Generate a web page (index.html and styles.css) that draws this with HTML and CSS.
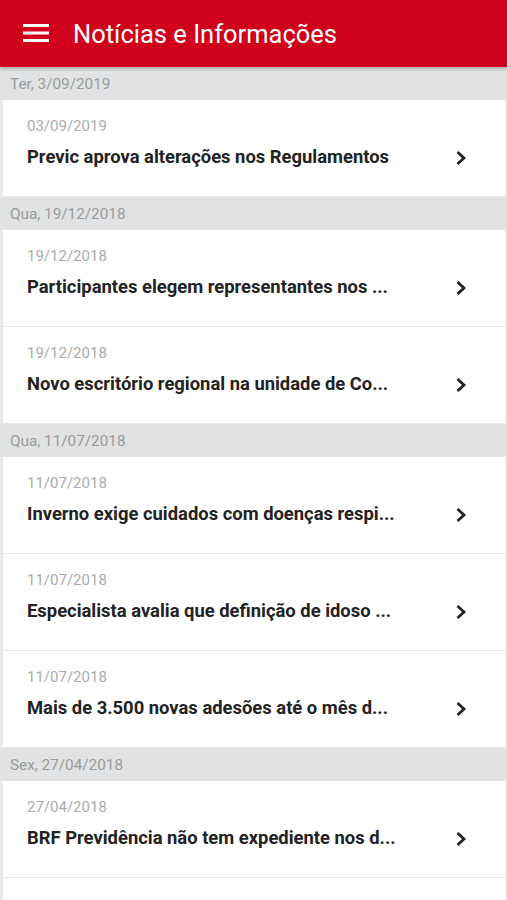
FILE: index.html
```html
<!DOCTYPE html>
<html lang="pt">
<head>
<meta charset="utf-8">
<link rel="stylesheet" href="styles.css">
</head>
<body>
<header class="appbar">
  <svg class="menu" width="26" height="18" viewBox="0 0 26 18"><rect x="0" y="0" width="26" height="3" fill="#fff"/><rect x="0" y="7.5" width="26" height="3" fill="#fff"/><rect x="0" y="15" width="26" height="3" fill="#fff"/></svg>
  <h1 class="title">Notícias e Informações</h1>
</header>
<main class="list">
  <div class="section">Ter, 3/09/2019</div>
  <div class="card"><div class="text"><div class="date">03/09/2019</div><div class="headline">Previc aprova alterações nos Regulamentos</div></div><svg class="chev" width="12" height="16" viewBox="0 0 12 16"><path d="M2.5 2 L9 8 L2.5 14" fill="none" stroke="#222" stroke-width="2.8"/></svg></div>
  <div class="section">Qua, 19/12/2018</div>
  <div class="card"><div class="text"><div class="date">19/12/2018</div><div class="headline">Participantes elegem representantes nos ...</div></div><svg class="chev" width="12" height="16" viewBox="0 0 12 16"><path d="M2.5 2 L9 8 L2.5 14" fill="none" stroke="#222" stroke-width="2.8"/></svg></div>
  <div class="card"><div class="text"><div class="date">19/12/2018</div><div class="headline">Novo escritório regional na unidade de Co...</div></div><svg class="chev" width="12" height="16" viewBox="0 0 12 16"><path d="M2.5 2 L9 8 L2.5 14" fill="none" stroke="#222" stroke-width="2.8"/></svg></div>
  <div class="section">Qua, 11/07/2018</div>
  <div class="card"><div class="text"><div class="date">11/07/2018</div><div class="headline">Inverno exige cuidados com doenças respi...</div></div><svg class="chev" width="12" height="16" viewBox="0 0 12 16"><path d="M2.5 2 L9 8 L2.5 14" fill="none" stroke="#222" stroke-width="2.8"/></svg></div>
  <div class="card"><div class="text"><div class="date">11/07/2018</div><div class="headline">Especialista avalia que definição de idoso ...</div></div><svg class="chev" width="12" height="16" viewBox="0 0 12 16"><path d="M2.5 2 L9 8 L2.5 14" fill="none" stroke="#222" stroke-width="2.8"/></svg></div>
  <div class="card"><div class="text"><div class="date">11/07/2018</div><div class="headline">Mais de 3.500 novas adesões até o mês d...</div></div><svg class="chev" width="12" height="16" viewBox="0 0 12 16"><path d="M2.5 2 L9 8 L2.5 14" fill="none" stroke="#222" stroke-width="2.8"/></svg></div>
  <div class="section">Sex, 27/04/2018</div>
  <div class="card"><div class="text"><div class="date">27/04/2018</div><div class="headline">BRF Previdência não tem expediente nos d...</div></div><svg class="chev" width="12" height="16" viewBox="0 0 12 16"><path d="M2.5 2 L9 8 L2.5 14" fill="none" stroke="#222" stroke-width="2.8"/></svg></div>
  <div class="card"></div>
</main>
</body>
</html>
```
FILE: styles.css
```css
* { box-sizing: border-box; }
html, body { margin: 0; padding: 0; }
body {
  background: #e9eaeb;
  font-family: Roboto, "Liberation Sans", Arial, sans-serif;
  height: 900px;
  overflow: hidden;
}
.appbar {
  height: 67px;
  background: #d0011b;
  display: flex;
  align-items: center;
  padding-left: 23px;
  box-shadow: 0 2px 3px rgba(0,0,0,0.25);
  position: relative;
  z-index: 1;
}
.menu { display: block; margin-top: -1px; }
.title {
  margin: 0 0 0 24px;
  font-weight: 400;
  font-size: 25.5px;
  color: #fff;
}
.list { display: flex; flex-direction: column; }
.section {
  height: 33px;
  background: #e0e2e3;
  color: #9a9a9a;
  font-size: 15.3px;
  line-height: 35px;
  padding-left: 10px;
}
.card {
  height: 96px;
  margin: 0 2px 1px 3px;
  background: #fff;
  display: flex;
  align-items: flex-start;
  padding: 16px 0 0 24px;
}
.text { flex: 1; }
.date {
  font-size: 15px;
  line-height: 20px;
  color: #ababab;
}
.headline {
  margin-top: 10px;
  font-size: 18.4px;
  line-height: 22px;
  font-weight: 700;
  color: #222;
}
.chev { margin: 34px 38px 0 0; }
```
